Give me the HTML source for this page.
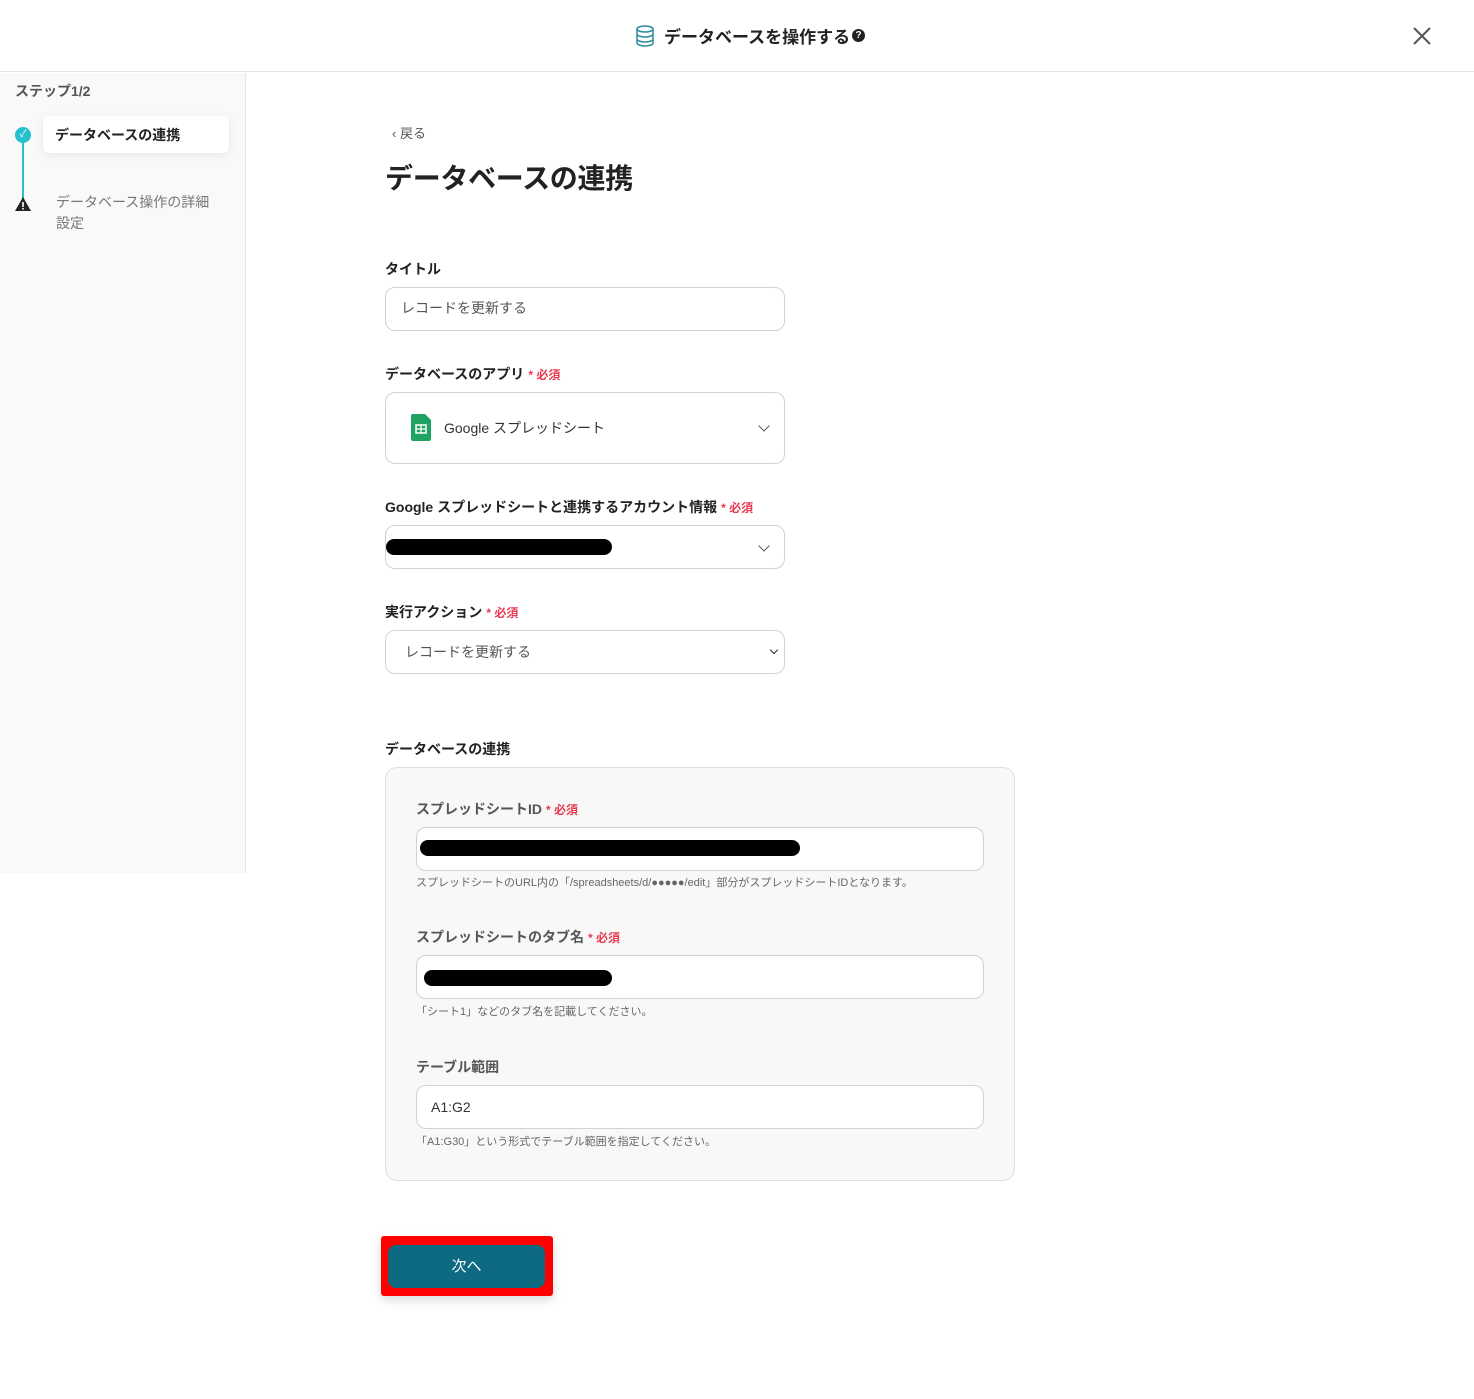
<!DOCTYPE html>
<html><head><meta charset="utf-8"><style>
*{box-sizing:border-box;margin:0;padding:0}
body{width:1474px;height:1399px;position:relative;background:#fff;font-family:"Liberation Sans","Noto Sans CJK JP",sans-serif;color:#222;overflow:hidden}
.a{position:absolute}
.hdr{left:0;top:0;width:1474px;height:72px;border-bottom:1px solid #e3e3e3}
.side{left:0;top:73px;width:246px;height:800px;background:#f9f9f9;border-right:1px solid #e6e6e6}
.lbl{font-size:14px;font-weight:bold;color:#222}
.req{color:#e8384f;font-size:12px;font-weight:bold;margin-left:4px}
.inp{background:#fff;border:1px solid #cfd3d8;border-radius:10px}
.chev{width:8px;height:8px;border-right:1.6px solid #555;border-bottom:1.6px solid #555;transform:rotate(45deg)}
.bar{background:#000;border-radius:10px;height:16px}
.hint{font-size:11px;color:#666}
.gl{color:#555}
</style></head><body>
<div class="a hdr"></div>
<svg class="a" style="left:635px;top:25px" width="20" height="22" viewBox="0 0 20 22" fill="none" stroke="#2a8a9a" stroke-width="1.5"><ellipse cx="10" cy="4" rx="8" ry="3"/><path d="M2 4v14c0 1.7 3.6 3 8 3s8-1.3 8-3V4M2 9c0 1.7 3.6 3 8 3s8-1.3 8-3M2 14c0 1.7 3.6 3 8 3s8-1.3 8-3"/></svg>
<div class="a" style="left:664px;top:23px;font-size:17px;font-weight:bold">データベースを操作する</div>
<div class="a" style="left:852px;top:29px;width:13px;height:13px;border-radius:50%;background:#222;color:#fff;font-size:10px;font-weight:bold;text-align:center;line-height:13px">?</div>
<svg class="a" style="left:1412px;top:26px" width="20" height="20" viewBox="0 0 20 20" stroke="#555" stroke-width="2"><path d="M2 2L18 18M18 2L2 18"/></svg>

<div class="a side"></div>
<div class="a" style="left:15px;top:81px;font-size:14px;color:#555;font-weight:bold">ステップ1/2</div>
<div class="a" style="left:22px;top:134px;width:2px;height:70px;background:#27c0d0"></div>
<div class="a" style="left:15px;top:127px;width:16px;height:16px;border-radius:50%;background:#27c0d0;color:#fff;font-size:10px;text-align:center;line-height:16px">✓</div>
<svg class="a" style="left:14px;top:196px" width="18" height="16" viewBox="0 0 18 16"><path d="M9 1L17 15H1z" fill="#222"/><rect x="8.2" y="6" width="1.6" height="5" fill="#fff"/><rect x="8.2" y="12" width="1.6" height="1.6" fill="#fff"/></svg>
<div class="a" style="left:43px;top:116px;width:186px;height:37px;background:#fff;border-radius:6px;box-shadow:0 2px 8px rgba(0,0,0,.08)"></div>
<div class="a" style="left:55px;top:125px;font-size:14px;font-weight:bold">データベースの連携</div>
<div class="a" style="left:56px;top:192px;font-size:14px;color:#777;line-height:21px;width:170px">データベース操作の詳細<br>設定</div>

<div class="a" style="left:392px;top:123px;font-size:13px;color:#555">‹ 戻る</div>
<div class="a" style="left:385px;top:157px;font-size:28px;font-weight:bold;letter-spacing:-0.3px">データベースの連携</div>

<div class="a lbl" style="left:385px;top:259px">タイトル</div>
<div class="a inp" style="left:385px;top:287px;width:400px;height:44px"></div>
<div class="a gl" style="left:401px;top:298px;font-size:14px">レコードを更新する</div>

<div class="a lbl" style="left:385px;top:364px">データベースのアプリ<span class="req">* 必須</span></div>
<div class="a inp" style="left:385px;top:392px;width:400px;height:72px"></div>
<svg class="a" style="left:411px;top:414px" width="20" height="27" viewBox="0 0 20 27"><path d="M0 2a2 2 0 0 1 2-2h12l6 6v19a2 2 0 0 1-2 2H2a2 2 0 0 1-2-2z" fill="#1ea362"/><rect x="5" y="11" width="10" height="8" fill="none" stroke="#fff" stroke-width="1.5"/><path d="M5 15h10M10 11v8" stroke="#fff" stroke-width="1.3"/></svg>
<div class="a" style="left:444px;top:418px;font-size:14px;color:#333">Google スプレッドシート</div>
<div class="a chev" style="left:760px;top:422px"></div>

<div class="a lbl" style="left:385px;top:497px">Google スプレッドシートと連携するアカウント情報<span class="req">* 必須</span></div>
<div class="a inp" style="left:385px;top:525px;width:400px;height:44px"></div>
<div class="a bar" style="left:386px;top:539px;width:226px"></div>
<div class="a chev" style="left:760px;top:542px"></div>

<div class="a lbl" style="left:385px;top:602px">実行アクション<span class="req">* 必須</span></div>
<div class="a inp" style="left:385px;top:630px;width:400px;height:44px"></div>
<div class="a gl" style="left:405px;top:642px;font-size:14px">レコードを更新する</div>
<div class="a chev" style="left:771px;top:647px;width:6px;height:6px;border-color:#333"></div>

<div class="a lbl" style="left:385px;top:739px">データベースの連携</div>
<div class="a" style="left:385px;top:767px;width:630px;height:414px;background:#f8f8f8;border:1px solid #dcdfe3;border-radius:12px"></div>
<div class="a lbl" style="left:416px;top:799px;color:#555">スプレッドシートID<span class="req">* 必須</span></div>
<div class="a inp" style="left:416px;top:827px;width:568px;height:44px"></div>
<div class="a bar" style="left:420px;top:840px;width:380px"></div>
<div class="a hint" style="left:416px;top:874px">スプレッドシートのURL内の「/spreadsheets/d/●●●●●/edit」部分がスプレッドシートIDとなります。</div>
<div class="a lbl" style="left:416px;top:927px;color:#555">スプレッドシートのタブ名<span class="req">* 必須</span></div>
<div class="a inp" style="left:416px;top:955px;width:568px;height:44px"></div>
<div class="a bar" style="left:424px;top:970px;width:188px"></div>
<div class="a hint" style="left:416px;top:1003px">「シート1」などのタブ名を記載してください。</div>
<div class="a lbl" style="left:416px;top:1057px;color:#555">テーブル範囲</div>
<div class="a inp" style="left:416px;top:1085px;width:568px;height:44px"></div>
<div class="a" style="left:431px;top:1099px;font-size:14px;color:#333">A1:G2</div>
<div class="a hint" style="left:416px;top:1133px">「A1:G30」という形式でテーブル範囲を指定してください。</div>

<div class="a" style="left:381px;top:1236px;width:172px;height:60px;background:#f00;border-radius:3px;box-shadow:0 4px 10px rgba(0,0,0,.15)"></div>
<div class="a" style="left:388px;top:1245px;width:157px;height:43px;background:#0e6a80;border-radius:8px;color:#fff;font-size:15px;text-align:center;line-height:43px">次へ</div>
</body></html>
